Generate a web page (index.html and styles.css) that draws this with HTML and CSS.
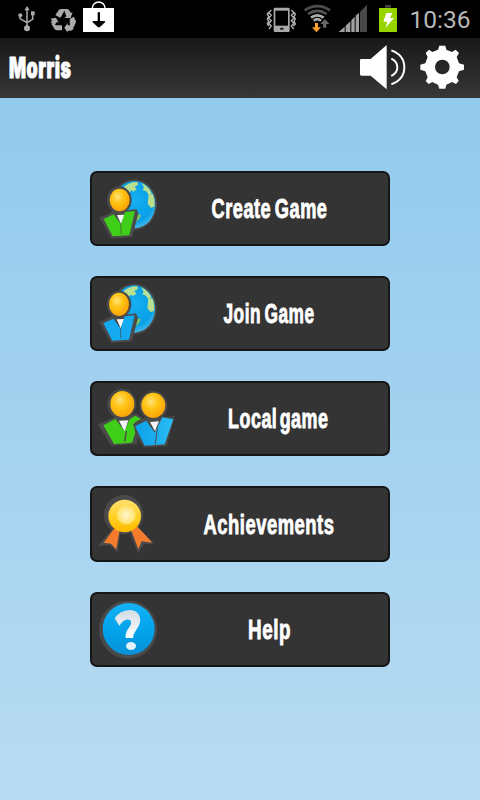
FILE: index.html
```html
<!DOCTYPE html>
<html lang="en">
<head>
<meta charset="utf-8">
<meta name="viewport" content="width=device-width">
<title>Morris</title>
<link rel="stylesheet" href="styles.css">
</head>
<body>
<svg class="defs" width="0" height="0" aria-hidden="true">
  <defs>
    <radialGradient id="gold" cx=".4" cy=".35" r=".65"><stop offset="0" stop-color="#ffe27a"/><stop offset=".45" stop-color="#ffc414"/><stop offset="1" stop-color="#fba406"/></radialGradient>
    <radialGradient id="sea" cx=".5" cy=".4" r=".6"><stop offset="0" stop-color="#16b0f2"/><stop offset=".75" stop-color="#079fe6"/><stop offset="1" stop-color="#48b9ea"/></radialGradient>
    <linearGradient id="medal" x1="0" y1="0" x2="0" y2="1"><stop offset="0" stop-color="#ffe070"/><stop offset=".6" stop-color="#ffce1c"/><stop offset="1" stop-color="#ffb800"/></linearGradient>
    <radialGradient id="shine"><stop offset="0" stop-color="#fff6cf"/><stop offset="1" stop-color="#ffe168"/></radialGradient>
    <linearGradient id="blue" x1="0" x2="1"><stop offset="0" stop-color="#0b9fe8"/><stop offset="1" stop-color="#2bbdf5"/></linearGradient>
    <linearGradient id="help" x1="0" y1="0" x2="0" y2="1"><stop offset="0" stop-color="#13b2f5"/><stop offset=".6" stop-color="#00a1ea"/><stop offset="1" stop-color="#0990d5"/></linearGradient>
    <linearGradient id="mark" x1="0" y1="0" x2="0" y2="1"><stop offset="0" stop-color="#d3dce2"/><stop offset="1" stop-color="#fff"/></linearGradient>
    <g id="globe">
      <ellipse cx="148" cy="119" rx="68" ry="76" fill="#4a4a4a"/>
      <ellipse cx="148" cy="119" rx="63" ry="71" fill="url(#sea)"/>
      <path d="M117 65Q136 49 158 51L159 60L149 65L155 73L145 80L139 76L132 83L120 76Z" fill="#b9df91"/>
      <path d="M169 54Q190 63 200 84L192 91L184 79L173 75L177 67Z" fill="#b9df91"/>
      <path d="M191 88L203 87Q211 105 208 125L197 128L188 116Z" fill="#b9df8c"/>
      <path d="M148 147L168 149Q165 165 149 172L144 178Z" fill="#83c75b"/>
    </g>
    <g id="single-shade">
      <ellipse cx="103" cy="105" rx="37" ry="41" fill="#4a4a4a"/>
      <path d="M43 158L67 148L85 137H121L154 132L160 145L142 216L80 221Z" fill="#4a4a4a"/>
    </g>
    <g id="single-body">
      <path d="M56 162L86 148L108 178L120 141L150 138L133 211L83 214Z"/>
      <path d="M107 178L109 208" stroke="#444" stroke-width="2"/>
    </g>
  </defs>
</svg>
<header class="status">
  <svg class="status-icons" width="120" height="38" viewBox="0 0 360 114">
    <g stroke="#aaa" stroke-width="4.5" fill="none"><path d="M81 86V28M60 48V56L81 68L98 58V42"/></g>
    <g fill="#aaa"><circle cx="81" cy="85" r="9"/><path d="M73 31L81 18L89 31Z"/><circle cx="61" cy="46" r="6"/><path d="M93 34H104V46H93Z"/></g>
    <g fill="#aaa">
      <path d="M166 45L177 29Q179 27 184 27H196L184 49L180 53Z"/>
      <path d="M191 27H201Q206 27 209 33L213 39L218 36L212 54H193L199 49Z"/>
      <path d="M209 57L221 50L228 64Q228 70 220 83L210 84Z"/>
      <path d="M221 87L213 92H203V98L193 83L203 69V76H215Z"/>
      <path d="M186 76V91H170Q166 91 163 86L154 71L162 69L167 76Z"/>
      <path d="M150 56L168 53L176 68L170 66L164 75L153 68L156 60Z"/>
    </g>
    <path d="M277 28V24A19 18 0 0 1 315 24V28" fill="none" stroke="#fff" stroke-width="4.5"/>
    <path d="M249 24H342V96H249Z" fill="#fff"/>
    <path d="M293 37H300V63H315V67L299 82H294L278 67V63H293Z" fill="#000"/>
  </svg>
  <div class="status-right">
    <svg width="140" height="38" viewBox="0 0 420 114">
      <g fill="none" stroke="#b4b4b4" stroke-width="4"><path d="M34 30L26 38L34 46L26 54L34 62L26 70L34 78L27 87M25 37L22 43L26 49L22 57L26 64L22 72L27 78M94 30L102 38L94 46L102 54L94 62L102 70L94 78L101 87M103 37L106 43L102 49L106 57L102 64L106 72L101 78"/></g>
      <rect x="41" y="23" width="48" height="73" rx="4" fill="#aaa"/><path d="M46 32H84V77H46Z" fill="#000"/><rect x="60" y="83" width="11" height="6" rx="2" fill="#222"/>
      <g fill="none" stroke-width="8"><path d="M134 31Q172 6 210 31" stroke="#4c4c4c"/><path d="M144 42Q172 23 200 42" stroke="#555"/><path d="M153 53Q172 39 191 53" stroke="#aaa"/><path d="M161 62Q172 53 183 62" stroke="#aaa"/></g>
      <path d="M165 69H174V82H183L169 97L156 82H165Z" fill="#ff9d2e"/>
      <path d="M189 83V72H181L195 57L208 72H199V83Z" fill="#666"/>
      <path d="M236 96L254 80V96ZM257 77L271 64V96H257ZM274 61L284 50V96H274ZM287 47L297 38V96H287Z" fill="#a0a0a0"/><path d="M300 35L321 14V96H300Z" fill="#484848"/>
      <path d="M375 15H393V23H375Z" fill="#444"/><path d="M357 24H411V96H357Z" fill="#98d400"/>
      <path d="M379 39H397L390 54H402L376 84L382 65H370Z" fill="#fff"/>
    </svg>
    <svg class="clock" width="80" height="38" viewBox="0 0 80 38"><text x="9.5" y="28" textLength="61" lengthAdjust="spacing">10:36</text></svg>
  </div>
</header>
<div class="bar">
  <svg class="label" width="90" height="60" viewBox="0 0 90 60"><text x="9" y="40" textLength="62.5" lengthAdjust="spacingAndGlyphs">Morris</text></svg>
  <svg width="130" height="60" viewBox="0 6 390 180">
    <path d="M34 69H62L110 27V160L62 119H34Q30 119 30 115V73Q30 69 34 69Z" fill="#fff"/>
    <path d="M124 68Q142 77 142 94T124 120M124 43Q163 57 163 94T124 145" fill="none" stroke="#fff" stroke-width="6"/>
    <path fill="#fff" fill-rule="evenodd" d="M268 29H286L289 41L306 48L317 41L327 51L320 63L327 82L342 86V101L327 106L320 124L326 135L318 144L306 138L289 146L286 158H268L264 146L247 138L236 144L227 135L233 124L226 106L211 101V86L226 82L233 63L227 51L237 41L247 48L264 41ZM277 71A22 22 0 1 0 277 115A22 22 0 1 0 277 71Z"/>
  </svg>
</div>
<main class="menu">
  <button class="item">
    <svg width="86" height="71" viewBox="21 24 258 213">
      <use href="#globe"/><use href="#single-shade"/><path d="M96 150L120 149L108 177Z" fill="#f3f5fa"/><use href="#single-body" fill="#40cf19"/><ellipse cx="104" cy="105" rx="30" ry="34" fill="url(#gold)"/>
    </svg>
    <svg class="label" width="210" height="71" viewBox="178 173 210 71"><text x="211.5" y="218" textLength="116" lengthAdjust="spacingAndGlyphs">Create Game</text></svg>
  </button>
  <button class="item">
    <svg width="86" height="71" viewBox="21 24 258 213">
      <g transform="translate(-1 -2)"><use href="#globe"/><use href="#single-shade"/><path d="M96 150L120 149L108 177Z" fill="#f3f5fa"/><use href="#single-body" fill="#14aaf0"/><ellipse cx="103" cy="105" rx="30" ry="35" fill="url(#gold)"/></g>
    </svg>
    <svg class="label" width="210" height="71" viewBox="178 173 210 71"><text x="223.5" y="218" textLength="91" lengthAdjust="spacingAndGlyphs">Join Game</text></svg>
  </button>
  <button class="item">
    <svg width="86" height="71" viewBox="21 24 258 213">
      <g fill="#4a4a4a"><ellipse cx="110" cy="87" rx="43" ry="46"/><ellipse cx="205" cy="92" rx="42" ry="44"/><path d="M38 148L69 135L90 126L157 117L170 127L155 207L79 213ZM132 146L168 130L269 124L245 213L176 217Z"/></g>
      <path d="M102 137L130 136L119 170Z" fill="#f3f5fa"/>
      <path d="M55 151L91 132L119 169L134 132L151 122L168 133L145 149L151 173L141 203L87 207Z" fill="#40cf19"/>
      <path d="M124 168L119 199" stroke="#4a4a4a" stroke-width="4"/>
      <path d="M146 151Q158 136 170 137" stroke="#4a4a4a" stroke-width="6" fill="none"/>
      <path d="M195 141L222 139L210 169Z" fill="#f3f5fa"/>
      <path d="M150 154L184 137L209 173L232 127L265 133L239 208L179 212Z" fill="url(#blue)"/>
      <path d="M218 151L211 208" stroke="#4a4a4a" stroke-width="3"/>
      <ellipse cx="112" cy="87" rx="36" ry="39" fill="url(#gold)"/><ellipse cx="205" cy="91" rx="36" ry="38" fill="url(#gold)"/>
    </svg>
    <svg class="label tight" width="210" height="71" viewBox="178 173 210 71"><text x="228" y="218" textLength="100.5" lengthAdjust="spacingAndGlyphs">Local game</text></svg>
  </button>
  <button class="item">
    <svg width="86" height="71" viewBox="21 24 258 213">
      <g fill="#4a4a4a"><circle cx="116" cy="104" r="59"/><path d="M83 145L38 199L75 195L97 217L108 150ZM132 150L159 220L175 194L207 190L157 139Z"/></g>
      <path d="M87 146L56 188L78 191L94 208L104 149Z" fill="#f47b2c"/><path d="M138 149L160 208L170 184L202 188L156 139Z" fill="#f47b2c"/>
      <circle cx="119" cy="108" r="49" fill="url(#medal)"/><circle cx="124" cy="105" r="28" fill="url(#shine)"/>
    </svg>
    <svg class="label" width="210" height="71" viewBox="178 173 210 71"><text x="203.5" y="219" textLength="131" lengthAdjust="spacingAndGlyphs">Achievements</text></svg>
  </button>
  <button class="item">
    <svg width="86" height="71" viewBox="21 21 258 213">
      <circle cx="129" cy="128" r="87" fill="#4a4a4a"/><circle cx="131" cy="126" r="78" fill="url(#help)"/>
      <path d="M89 94Q104 70 134 69C158 69 169 87 165 106C161 126 146 132 144 153L122 153C120 130 135 122 138 110C140 100 133 96 124 98Q112 101 103 116Z" fill="url(#mark)"/>
      <ellipse cx="138" cy="177" rx="15" ry="12" fill="#e5f4fc"/>
    </svg>
    <svg class="label" width="210" height="71" viewBox="178 173 210 71"><text x="248" y="218" textLength="43" lengthAdjust="spacingAndGlyphs">Help</text></svg>
  </button>
</main>
</body>
</html>
```
FILE: styles.css
```css
* { box-sizing: border-box; }
body {
  margin: 0;
  width: 480px;
  height: 800px;
  display: flex;
  flex-direction: column;
  overflow: hidden;
  font-family: Inter, "Liberation Sans", sans-serif;
}
svg { display: block; flex: none; overflow: visible; }
.defs { width: 0; height: 0; position: absolute; }
.status {
  height: 38px;
  background: #000;
  display: flex;
  justify-content: space-between;
}
.status-right { display: flex; }
.clock text {
  font-family: Roboto, sans-serif;
  font-size: 24.5px;
  fill: #b8b8b8;
}
.bar {
  height: 60px;
  display: flex;
  justify-content: space-between;
  background: linear-gradient(#181818, #373737);
}
.label text {
  font-size: 28px;
  font-weight: 900;
  letter-spacing: .8px;
  word-spacing: -3px;
  fill: #fff;
  stroke: #fff;
  stroke-width: .9px;
}
.tight text { word-spacing: -5px; }
.menu {
  flex: 1;
  padding: 73px 90px 0;
  display: grid;
  grid-template-rows: 75px 75px 75px 76px 75px;
  gap: 30px;
  align-content: start;
  background: linear-gradient(#92caed, #b8dbf2);
}
.item {
  display: flex;
  align-items: flex-start;
  width: 300px;
  margin: 0;
  padding: 0;
  border: 2px solid #161616;
  border-radius: 7px;
  background: #343434;
}
```
